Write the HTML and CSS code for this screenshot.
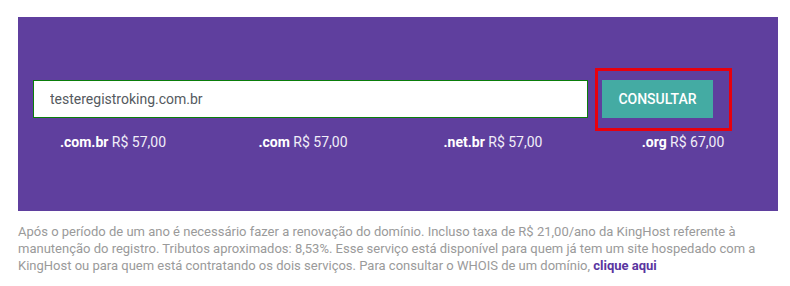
FILE: index.html
```html
<!DOCTYPE html>
<html lang="pt-BR">
<head>
<meta charset="utf-8">
<link rel="stylesheet" href="styles.css">
</head>
<body>
<section class="panel">
  <form class="search">
    <input class="domain" type="text" value="testeregistroking.com.br">
    <div class="btn-wrap">
      <button class="btn" type="button">CONSULTAR</button>
      <span class="highlight"></span>
    </div>
  </form>
  <ul class="prices">
    <li><b>.com.br</b> R$ 57,00</li>
    <li><b>.com</b> R$ 57,00</li>
    <li><b>.net.br</b> R$ 57,00</li>
    <li><b>.org</b> R$ 67,00</li>
  </ul>
</section>
<p class="note">Após o período de um ano é necessário fazer a renovação do domínio. Incluso taxa de R$ 21,00/ano da KingHost referente à manutenção do registro. Tributos aproximados: 8,53%. Esse serviço está disponível para quem já tem um site hospedado com a KingHost ou para quem está contratando os dois serviços. Para consultar o WHOIS de um domínio, <a href="#">clique aqui</a></p>
</body>
</html>
```
FILE: styles.css
```css
* { box-sizing: border-box; }
html, body { margin: 0; padding: 0; background: #fff; }
body { font-family: Roboto, "Open Sans", sans-serif; }

.panel {
  margin: 17px 0 0 18px;
  width: 760px;
  height: 194px;
  background: #5f3f9e;
  padding: 63px 0 0 15px;
}

.search {
  display: flex;
  align-items: stretch;
  gap: 14px;
  margin: 0;
}

.domain {
  width: 555px;
  height: 38px;
  border: 1px solid #0a7d0a;
  background: #fff;
  padding: 0 16px;
  font-family: Roboto, sans-serif;
  font-size: 14px;
  color: #555a60;
  outline: none;
}

.btn-wrap { position: relative; }

.btn {
  width: 111px;
  height: 38px;
  border: 0;
  background: #44aba3;
  color: #fff;
  font-family: Roboto, sans-serif;
  font-weight: 500;
  font-size: 14px;
  padding: 0;
}

.highlight {
  position: absolute;
  left: -7px;
  top: -12px;
  width: 137px;
  height: 63px;
  border: 3px solid #e8000d;
}

.prices {
  list-style: none;
  margin: 10px 0 0 -15px;
  padding: 0;
  display: grid;
  grid-template-columns: repeat(4, 1fr);
  color: #f1eef8;
  font-size: 14px;
  line-height: 28px;
}
.prices li { text-align: center; }
.prices b { font-weight: 700; color: #fff; }

.note {
  margin: 12px 0 0 18px;
  width: 760px;
  font-size: 13px;
  line-height: 17px;
  color: #9a9a9a;
}
.note a { color: #5a35a0; font-weight: 700; text-decoration: none; }
```
